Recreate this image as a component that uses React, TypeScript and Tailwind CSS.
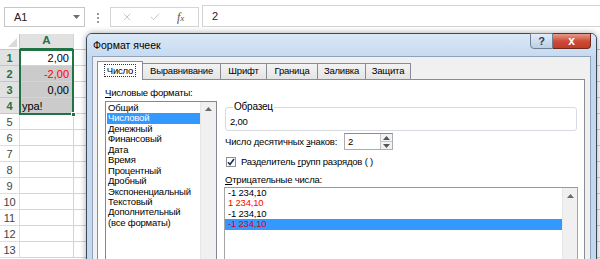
import { X, Check } from "lucide-react";

function UpTri({ c = "#5a5a5a" }: { c?: string }) {
  return (
    <svg width="7" height="4" viewBox="0 0 7 4">
      <path d="M0 4L3.5 0L7 4z" fill={c} />
    </svg>
  );
}
function DownTri({ c = "#5a5a5a" }: { c?: string }) {
  return (
    <svg width="7" height="4" viewBox="0 0 7 4">
      <path d="M0 0h7L3.5 4z" fill={c} />
    </svg>
  );
}

const cellVals: Record<number, { t: string; cls: string; bg: string }> = {
  1: { t: "2,00", cls: "justify-end pr-[4px] text-black", bg: "bg-white" },
  2: { t: "-2,00", cls: "justify-end pr-[4px] text-[#ff0000]", bg: "bg-[#cbcbcb]" },
  3: { t: "0,00", cls: "justify-end pr-[4px] text-black", bg: "bg-[#cbcbcb]" },
  4: { t: "ура!", cls: "justify-start pl-[2px] text-black", bg: "bg-[#cbcbcb]" },
};

const formats = [
  "Общий",
  "Числовой",
  "Денежный",
  "Финансовый",
  "Дата",
  "Время",
  "Процентный",
  "Дробный",
  "Экспоненциальный",
  "Текстовый",
  "Дополнительный",
  "(все форматы)",
];

const negs = [
  { t: "-1 234,10", cls: "text-black", sel: false },
  { t: "1 234,10", cls: "text-[#ff0000]", sel: false },
  { t: "-1 234,10", cls: "text-black", sel: false },
  { t: "-1 234,10", cls: "text-[#d4002a]", sel: true },
];

const tabs = [
  { t: "Выравнивание", w: "w-[78px]" },
  { t: "Шрифт", w: "w-[46px]" },
  { t: "Граница", w: "w-[51px]" },
  { t: "Заливка", w: "w-[48px]" },
  { t: "Защита", w: "w-[45px]" },
];

export default function App() {
  const rows = Array.from({ length: 13 }, (_, i) => i + 1);
  return (
    <div className="relative w-[600px] h-[259px] overflow-hidden bg-white font-['Liberation_Sans',Arial,sans-serif] text-black">
      {/* formula bar */}
      <div className="flex items-start h-[34px]">
        <div className="ml-[4px] mt-[7px] w-[81px] h-[20px] border border-[#c6c6c6] flex items-center pl-[9px] pr-[4px] text-[11px] text-[#222]">
          <span className="flex-1">A1</span>
          <DownTri c="#6e6e6e" />
        </div>
        <div className="ml-[12px] mt-[13px] flex flex-col gap-[2px]">
          <div className="w-[2px] h-[2px] bg-[#9a9a9a]" />
          <div className="w-[2px] h-[2px] bg-[#9a9a9a]" />
          <div className="w-[2px] h-[2px] bg-[#9a9a9a]" />
        </div>
        <div className="ml-[11px] mt-[7px] w-[89px] h-[20px] border border-[#d4d4d4] flex items-center">
          <X size={12} strokeWidth={1.5} className="ml-[10px] text-[#b4b4b4]" />
          <Check size={12} strokeWidth={1.5} className="ml-[16px] text-[#b4b4b4]" />
          <span className="ml-[16px] font-['Liberation_Serif',serif] italic text-[12px] text-[#555] leading-none">
            f<span className="text-[9px]">x</span>
          </span>
        </div>
        <div className="ml-[3px] mt-[5px] flex-1 h-[22px] border-y border-l border-[#d4d4d4] flex items-center pl-[9px] pt-[1px] text-[11px] text-[#222]">
          2
        </div>
      </div>

      {/* grid */}
      <div className="flex flex-col text-[11px]">
        <div className="flex h-[16px]">
          <div className="w-[20px] h-full bg-white border-b border-r border-[#c6c6c6] flex items-end justify-end pr-[2px] pb-[2px]">
            <svg width="9" height="9" viewBox="0 0 9 9">
              <path d="M9 0V9H0z" fill="#dadada" />
            </svg>
          </div>
          <div className="w-[53px] h-full bg-[#e1e1e1] border-b-2 border-[#217346] flex items-center justify-center font-bold text-[#217346] text-[11.5px]">
            A
          </div>
          <div className="flex-1 h-full bg-white border-b border-[#c6c6c6] border-l border-l-[#d4d4d4]" />
        </div>
        {rows.map((r) => {
          const v = cellVals[r];
          const sel = !!v;
          return (
            <div key={r} className="flex h-[16px]">
              <div
                className={`w-[20px] h-full border-b border-r flex items-center justify-center pt-[2px] ${
                  sel
                    ? "bg-[#e1e1e1] border-[#c6c6c6] text-[#217346] font-bold"
                    : "bg-white border-[#dedede] text-[#444]"
                }`}
              >
                {r}
              </div>
              <div
                className={`w-[53px] h-full border-b border-[#d4d4d4] flex items-center pt-[2px] ${
                  v ? v.bg : "bg-white"
                } ${v ? v.cls : ""}`}
              >
                {v ? v.t : ""}
              </div>
              <div className="w-[64px] h-full border-b border-l border-[#d4d4d4]" />
              <div className="flex-1 h-full border-b border-l border-[#d4d4d4]" />
            </div>
          );
        })}
      </div>

      {/* selection border */}
      <div className="absolute left-[19px] top-[49px] w-[55px] h-[66px] border-2 border-[#217346]" />
      <div className="absolute left-[71px] top-[112px] w-[5px] h-[5px] bg-[#217346] border border-white" />

      {/* dialog */}
      <div className="absolute left-[86px] top-[33px] w-[511px] h-[240px] border border-[#3c4a5c] rounded-t-[6px] bg-[#c4d8ee] shadow-[0_0_6px_rgba(0,0,0,0.35)] flex flex-col font-['Liberation_Sans',Arial,sans-serif] text-[9.5px] tracking-[-0.2px] text-black">
        {/* title bar */}
        <div className="h-[22px] flex items-start rounded-t-[5px] bg-gradient-to-b from-[#dbe8f7] to-[#c6daf0]">
          <span className="ml-[6px] mt-[5px] text-[10.5px] leading-[12px] tracking-normal text-black">Формат ячеек</span>
          <div className="ml-auto mr-[5px] -mt-[1px] flex">
            <div className="w-[23px] h-[16px] border border-[#6f7f94] rounded-bl-[4px] bg-gradient-to-b from-[#e3edf8] to-[#bccfe6] flex items-center justify-center text-[11px] leading-none text-[#2d3e55] font-bold">
              ?
            </div>
            <div className="w-[38px] h-[16px] border border-l-0 border-[#6b2a20] rounded-br-[4px] bg-gradient-to-b from-[#e59a8b] via-[#cf4b36] to-[#c23b26] flex items-center justify-center text-white font-bold text-[12px] leading-none">
              x
            </div>
          </div>
        </div>
        {/* content */}
        <div className="mx-[5px] flex-1 border border-b-0 border-[#8ea3bb] bg-[#f0f0f0] flex flex-col">
          {/* tab strip */}
          <div className="mt-[4px] h-[18px] pl-[4px] flex items-end">
            <div className="relative z-10 w-[46px] h-[19px] -mb-[1px] bg-white border border-b-0 border-[#898c95] flex items-center justify-center pb-[2px]">
              <span className="border border-dotted border-[#333] px-[2px] leading-[11px]">Число</span>
            </div>
            {tabs.map((tb) => (
              <div
                key={tb.t}
                className={`${tb.w} h-[16px] bg-gradient-to-b from-[#f3f3f3] to-[#e4e4e4] border border-b-0 border-l-0 border-[#898c95] flex items-center justify-center`}
              >
                {tb.t}
              </div>
            ))}
          </div>
          {/* panel */}
          <div className="ml-[4px] mr-[5px] flex-1 bg-white border border-b-0 border-[#898c95] flex pl-[7px]">
            {/* left column */}
            <div className="w-[112px] flex flex-col">
              <div className="mt-[7px] leading-[12px] whitespace-nowrap">
                <span className="underline">Ч</span>исловые форматы:
              </div>
              <div className="mt-[2px] h-[170px] border border-[#828790] flex">
                <div className="flex-1 pt-[1px] pl-[1px] flex flex-col">
                  {formats.map((f, i) => (
                    <div
                      key={f}
                      className={`h-[10.45px] leading-[10.45px] pl-[1px] whitespace-nowrap ${
                        i === 1 ? "bg-[#3399ff] text-white" : ""
                      }`}
                    >
                      {f}
                    </div>
                  ))}
                </div>
                <div className="w-[16px] bg-[#f0f0f0] border-l border-[#e6e6e6] flex flex-col items-center pt-[5px]">
                  <UpTri c="#6a6a6a" />
                </div>
              </div>
            </div>
            {/* right column */}
            <div className="ml-[7px] w-[354px] flex flex-col">
              <fieldset className="mt-[21px] ml-[1px] w-[352px] border border-[#d5dbe1] rounded-[3px] pt-[3px] pb-[2px] pl-[4px]">
                <legend className="ml-[3px] px-[1px] leading-[12px] text-[10px]">Образец</legend>
                <div className="leading-[12px]">2,00</div>
              </fieldset>
              <div className="mt-[2px] flex items-center h-[17px]">
                <span className="ml-[1px] w-[119px] whitespace-nowrap pt-[2px]">
                  Число десятичных <span className="underline">з</span>наков:
                </span>
                <div className="w-[49px] h-[17px] border border-[#abadb3] border-t-[#8a8d94] flex">
                  <div className="flex-1 pl-[3px] pt-[2px] flex items-center">2</div>
                  <div className="w-[12px] flex flex-col border-l border-[#c8c8c8]">
                    <div className="flex-1 bg-[#f2f2f2] border-b border-[#c8c8c8] flex items-center justify-center">
                      <UpTri c="#555" />
                    </div>
                    <div className="flex-1 bg-[#f2f2f2] flex items-center justify-center">
                      <DownTri c="#555" />
                    </div>
                  </div>
                </div>
              </div>
              <div className="mt-[6px] h-[12px] flex items-center">
                <div className="ml-[2px] w-[10px] h-[10px] border border-[#8e8f8f] bg-white flex items-center justify-center">
                  <svg width="8" height="8" viewBox="0 0 8 8">
                    <path d="M1 4.2L3 6.5L7 1" fill="none" stroke="#1e2c5c" strokeWidth="1.6" />
                  </svg>
                </div>
                <span className="ml-[5px] leading-[12px] whitespace-nowrap">
                  Разделитель <span className="underline">г</span>рупп разрядов ( )
                </span>
              </div>
              <div className="mt-[6px] leading-[12px] ml-[1px] whitespace-nowrap">
                <span className="underline">О</span>трицательные числа:
              </div>
              <div className="mt-[1px] h-[80px] border border-[#a5a5a5] border-t-[#9a9a9a] flex">
                <div className="flex-1 flex flex-col">
                  {negs.map((n, i) => (
                    <div
                      key={i}
                      className={`h-[10.45px] leading-[10.45px] pl-[3px] whitespace-nowrap ${n.cls} ${
                        n.sel ? "bg-[#3399ff]" : ""
                      }`}
                    >
                      {n.t}
                    </div>
                  ))}
                </div>
                <div className="w-[15px] bg-[#f0f0f0] border-l border-[#e6e6e6] flex flex-col items-center pt-[6px]">
                  <UpTri c="#6a6a6a" />
                </div>
              </div>
            </div>
          </div>
        </div>
      </div>
    </div>
  );
}
